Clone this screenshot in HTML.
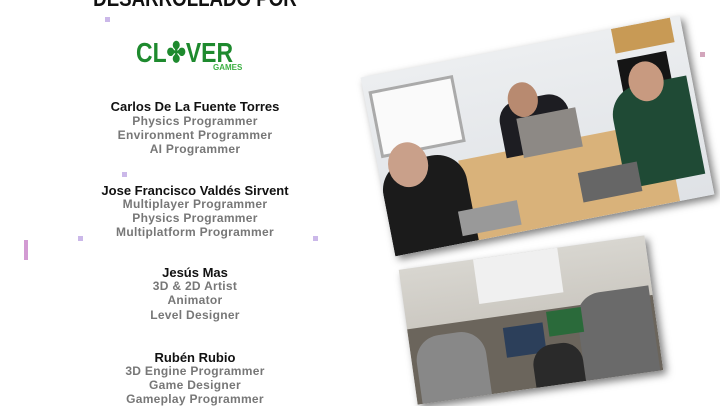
<!DOCTYPE html>
<html><head><style>
body{margin:0;width:720px;height:405px;background:#fff;overflow:hidden;position:relative;font-family:"Liberation Sans",sans-serif}
.t{position:absolute;left:40px;width:310px;text-align:center;font-weight:bold;white-space:nowrap}
.h{font-size:22px;top:-14px;color:#111;transform:scaleX(0.85)}
.n{font-size:13px;color:#111}
.r{font-size:12px;color:#777;letter-spacing:.3px}
.ph{position:absolute;box-shadow:3px 4px 8px rgba(0,0,0,.5);overflow:hidden}
.b{position:absolute}
.dot{position:absolute;width:5px;height:5px;background:#b59adf;opacity:.7}
</style></head><body>
<div class="t h">DESARROLLADO POR</div>
<div style="position:absolute;left:136px;top:36px;color:#1e8a2e;font-weight:bold;font-size:28px;transform:scaleX(0.82);transform-origin:left;letter-spacing:0">CL<span>✤</span>VER</div>
<div style="position:absolute;left:213px;top:63px;color:#3cb043;font-weight:bold;font-size:8px">GAMES</div>

<div class="t n" style="top:99px">Carlos De La Fuente Torres</div>
<div class="t r" style="top:114px">Physics Programmer</div>
<div class="t r" style="top:128px">Environment Programmer</div>
<div class="t r" style="top:142px">AI Programmer</div>

<div class="t n" style="top:183px">Jose Francisco Valdés Sirvent</div>
<div class="t r" style="top:197px">Multiplayer Programmer</div>
<div class="t r" style="top:211px">Physics Programmer</div>
<div class="t r" style="top:225px">Multiplatform Programmer</div>

<div class="t n" style="top:265px">Jesús Mas</div>
<div class="t r" style="top:279px">3D &amp; 2D Artist</div>
<div class="t r" style="top:293px">Animator</div>
<div class="t r" style="top:308px">Level Designer</div>

<div class="t n" style="top:350px">Rubén Rubio</div>
<div class="t r" style="top:364px">3D Engine Programmer</div>
<div class="t r" style="top:378px">Game Designer</div>
<div class="t r" style="top:392px">Gameplay Programmer</div>

<div class="dot" style="left:105px;top:17px"></div>
<div class="dot" style="left:122px;top:172px"></div>
<div class="dot" style="left:78px;top:236px"></div>
<div class="dot" style="left:24px;top:240px;height:20px;width:4px;background:#c070c0"></div>
<div class="dot" style="left:313px;top:236px"></div>
<div class="dot" style="left:700px;top:52px;background:#c080a0"></div>
<div class="dot" style="left:706px;top:175px;background:#d070c0"></div>

<div class="ph" style="left:375px;top:45px;width:325px;height:182px;transform:rotate(-11deg);background:#e9ebee">
 <div class="b" style="left:0;top:0;width:325px;height:182px;background:linear-gradient(#eceef0,#dfe2e6)"></div>
 <div class="b" style="left:5px;top:15px;width:80px;height:62px;background:#fafafa;border:3px solid #aaa"></div>
 <div class="b" style="left:255px;top:0;width:60px;height:25px;background:#c89a55"></div>
 <div class="b" style="left:255px;top:32px;width:50px;height:35px;background:#151515"></div>
 <div class="b" style="left:80px;top:100px;width:210px;height:82px;background:#d9b27a"></div>
 <div class="b" style="left:0;top:90px;width:85px;height:92px;background:#1b1b1b;border-radius:30px 30px 0 0"></div>
 <div class="b" style="left:10px;top:72px;width:40px;height:45px;background:#c9a08a;border-radius:50%"></div>
 <div class="b" style="left:128px;top:52px;width:70px;height:55px;background:#1d1d22;border-radius:20px 20px 0 0"></div>
 <div class="b" style="left:140px;top:35px;width:30px;height:35px;background:#b88a70;border-radius:50%"></div>
 <div class="b" style="left:145px;top:70px;width:60px;height:40px;background:#8d8985"></div>
 <div class="b" style="left:240px;top:60px;width:80px;height:100px;background:#1f4a35;border-radius:30px 0 0 0"></div>
 <div class="b" style="left:262px;top:38px;width:35px;height:40px;background:#c89a80;border-radius:50%"></div>
 <div class="b" style="left:195px;top:135px;width:60px;height:30px;background:#666"></div>
 <div class="b" style="left:70px;top:150px;width:60px;height:25px;background:#999"></div>
</div>

<div class="ph" style="left:407px;top:252px;width:248px;height:136px;transform:rotate(-8deg);background:#ddd">
 <div class="b" style="left:0;top:0;width:248px;height:136px;background:linear-gradient(#d8d6d0,#bdb8b0)"></div>
 <div class="b" style="left:75px;top:0;width:85px;height:45px;background:#f0f0f0"></div>
 <div class="b" style="left:0;top:60px;width:248px;height:76px;background:#6b655c"></div>
 <div class="b" style="left:5px;top:70px;width:70px;height:66px;background:#888;border-radius:25px 25px 0 0"></div>
 <div class="b" style="left:170px;top:50px;width:75px;height:86px;background:#6a6a6a;border-radius:25px 0 0 0"></div>
 <div class="b" style="left:95px;top:72px;width:40px;height:30px;background:#2c3f5a"></div>
 <div class="b" style="left:140px;top:62px;width:35px;height:25px;background:#2a6a3a"></div>
 <div class="b" style="left:120px;top:95px;width:50px;height:41px;background:#2a2a2a;border-radius:20px 20px 0 0"></div>
</div>
</body></html>
